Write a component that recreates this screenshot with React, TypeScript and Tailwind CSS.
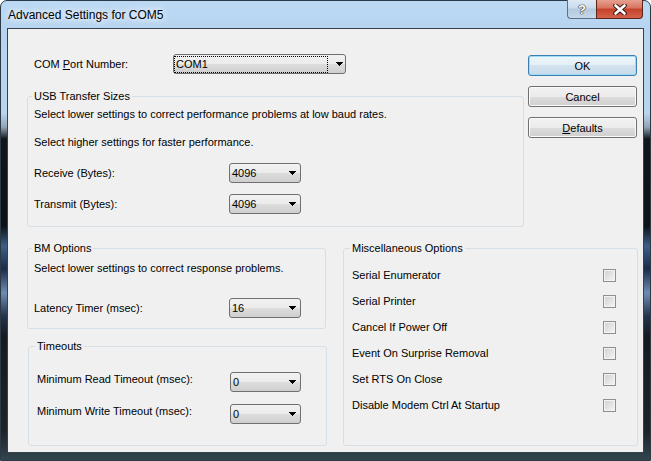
import React from 'react';

const Arrow: React.FC = () => (
  <svg width="7" height="4" viewBox="0 0 7 4" shapeRendering="crispEdges" className="shrink-0">
    <rect x="0" y="0" width="7" height="1" fill="#000" />
    <rect x="1" y="1" width="5" height="1" fill="#000" />
    <rect x="2" y="2" width="3" height="1" fill="#000" />
    <rect x="3" y="3" width="1" height="1" fill="#000" />
  </svg>
);

type ComboProps = { value: string; className: string; focused?: boolean };

const Combo: React.FC<ComboProps> = ({ value, className, focused }) => (
  <div
    className={`flex h-[20px] shrink-0 items-center rounded-[3px] border border-[#707070] bg-[linear-gradient(#f2f2f2,#ebebeb_50%,#dddddd_50%,#cfcfcf)] ${className}`}
  >
    {focused ? (
      <div className="flex h-[17px] w-[154px] items-center border border-dotted border-black pl-px">{value}</div>
    ) : (
      <div className="flex-1 pl-[2px]">{value}</div>
    )}
    {focused ? <div className="flex-1" /> : null}
    <div className={focused ? 'mr-[2px] flex' : 'mr-[4px] flex'}>
      <Arrow />
    </div>
  </div>
);

const Button: React.FC<{ children: React.ReactNode; primary?: boolean }> = ({ children, primary }) => (
  <div
    className={
      primary
        ? 'flex h-[21px] items-center justify-center rounded-[3px] border border-[#3c7fb1] bg-[linear-gradient(#eef6fb,#e3eef6_50%,#d3e3ef_50%,#c7dbe9)] shadow-[inset_0_0_0_1px_#9edbf6]'
        : 'flex h-[21px] items-center justify-center rounded-[3px] border border-[#707070] bg-[linear-gradient(#f2f2f2,#ebebeb_50%,#dddddd_50%,#cfcfcf)] shadow-[inset_0_0_0_1px_#fbfbfb]'
    }
  >
    {children}
  </div>
);

const Checkbox: React.FC = () => (
  <div className="h-[13px] w-[13px] shrink-0 border border-[#8e8f8f] bg-[linear-gradient(135deg,#cfcfcf,#f6f6f6)] shadow-[inset_0_0_0_1px_#f4f4f4]" />
);

const miscOptions = [
  'Serial Enumerator',
  'Serial Printer',
  'Cancel If Power Off',
  'Event On Surprise Removal',
  'Set RTS On Close',
  'Disable Modem Ctrl At Startup',
];

export default function App() {
  return (
    <div className="h-[461px] w-[651px] font-['Liberation_Sans',Arial,sans-serif] text-[11px] leading-[14px] text-black">
      <div className="flex h-full w-full flex-col rounded-t-[7px] border border-[#2c3a48] bg-[linear-gradient(180deg,#bcd9f4_0px,#b6d4f0_30px,#b8d5f0_112px,#93a5b5_126px,#10161c_138px,#0d1218_225px,#3d5e88_245px,#1b2b4a_268px,#6d8cb3_292px,#24344c_315px,#161b21_335px,#1d2329_430px,#34474f_461px)] px-[6px] pb-[7px]">
        {/* Title bar */}
        <div className="flex h-[27px] shrink-0 items-start justify-between">
          <div className="pl-px pt-[6px] text-[12px] leading-[16px] [text-shadow:0_0_6px_#fff,0_0_10px_#fff]">
            Advanced Settings for COM5
          </div>
          <div className="-mt-px mr-px flex">
            <div className="flex h-[19px] w-[29px] items-center justify-center rounded-bl-[4px] border border-t-0 border-r-0 border-[#5d6f82] bg-[linear-gradient(#dce9f5,#c9dbec_45%,#b3c9de_50%,#c6d8ea)] text-[13px] font-bold leading-[13px] text-white [text-shadow:0_0_1px_#222,0_0_1px_#222,0_0_1px_#222]">
              ?
            </div>
            <div className="flex h-[19px] w-[47px] items-center justify-center rounded-br-[4px] border border-t-0 border-[#5a241b] bg-[linear-gradient(#e6a090,#d8735d_45%,#c4412a_50%,#d5624a)]">
              <svg width="14" height="11" viewBox="0 0 14 11">
                <path d="M2.5 1.5L11.5 9.5M11.5 1.5L2.5 9.5" stroke="#3a1a14" strokeWidth="4.6" strokeLinecap="round" />
                <path d="M2.5 1.5L11.5 9.5M11.5 1.5L2.5 9.5" stroke="#fff" strokeWidth="2.6" strokeLinecap="round" />
              </svg>
            </div>
          </div>
        </div>

        {/* Client area */}
        <div className="flex-1 border border-[#34424f] bg-[#f0f0f0]">
          <div className="flex pl-[19px]">
            <div className="w-[497px]">
              <div className="mt-[25px] flex h-[20px] items-center pl-[7px]">
                <div className="w-[139px]">
                  COM <span className="underline">P</span>ort Number:
                </div>
                <Combo value="COM1" className="w-[173px]" focused />
              </div>

              <fieldset className="mt-[15px] rounded-[3px] border border-[#d5dfe5] pb-[12px] pl-[4px]">
                <legend className="px-[2px] leading-[14px]">USB Transfer Sizes</legend>
                <div className="pl-[2px]">
                  <div className="mt-[4px]">Select lower settings to correct performance problems at low baud rates.</div>
                  <div className="mt-[14px]">Select higher settings for faster performance.</div>
                  <div className="mt-[14px] flex h-[20px] items-center">
                    <div className="w-[195px]">Receive (Bytes):</div>
                    <Combo value="4096" className="w-[72px]" />
                  </div>
                  <div className="mt-[11px] flex h-[20px] items-center">
                    <div className="w-[195px]">Transmit (Bytes):</div>
                    <Combo value="4096" className="w-[72px]" />
                  </div>
                </div>
              </fieldset>
            </div>

            <div className="ml-[4px] mt-[26px] flex w-[109px] flex-col gap-[10px]">
              <Button primary>OK</Button>
              <Button>Cancel</Button>
              <Button>
                <span className="underline">D</span>efaults
              </Button>
            </div>
          </div>

          <div className="mt-[14px] flex pl-[19px]">
            <div className="w-[300px]">
              <fieldset className="w-[299px] rounded-[3px] border border-[#d5dfe5] pb-[10px] pl-[4px]">
                <legend className="px-[2px] leading-[14px]">BM Options</legend>
                <div className="pl-[2px]">
                  <div className="mt-[6px]">Select lower settings to correct response problems.</div>
                  <div className="mt-[23px] flex h-[20px] items-center">
                    <div className="w-[195px]">Latency Timer (msec):</div>
                    <Combo value="16" className="w-[72px]" />
                  </div>
                </div>
              </fieldset>

              <fieldset className="ml-px mt-[10px] w-[299px] rounded-[3px] border border-[#d5dfe5] pb-[21px] pl-[6px]">
                <legend className="px-[2px] leading-[14px]">Timeouts</legend>
                <div className="pl-[2px]">
                  <div className="mt-[19px] flex h-[20px] items-start">
                    <div className="w-[193px]">Minimum Read Timeout (msec):</div>
                    <Combo value="0" className="w-[71px]" />
                  </div>
                  <div className="mt-[12px] flex h-[20px] items-start">
                    <div className="w-[193px]">Minimum Write Timeout (msec):</div>
                    <Combo value="0" className="w-[71px]" />
                  </div>
                </div>
              </fieldset>
            </div>

            <fieldset className="ml-[16px] w-[295px] rounded-[3px] border border-[#d5dfe5] pb-[25px] pl-[6px] pr-[21px]">
              <legend className="px-[2px] leading-[14px]">Miscellaneous Options</legend>
              <div className="mt-[7px] pl-[2px]">
                {miscOptions.map((label) => (
                  <div key={label} className="flex h-[26px] items-center justify-between">
                    <span>{label}</span>
                    <Checkbox />
                  </div>
                ))}
              </div>
            </fieldset>
          </div>
        </div>
      </div>
    </div>
  );
}
